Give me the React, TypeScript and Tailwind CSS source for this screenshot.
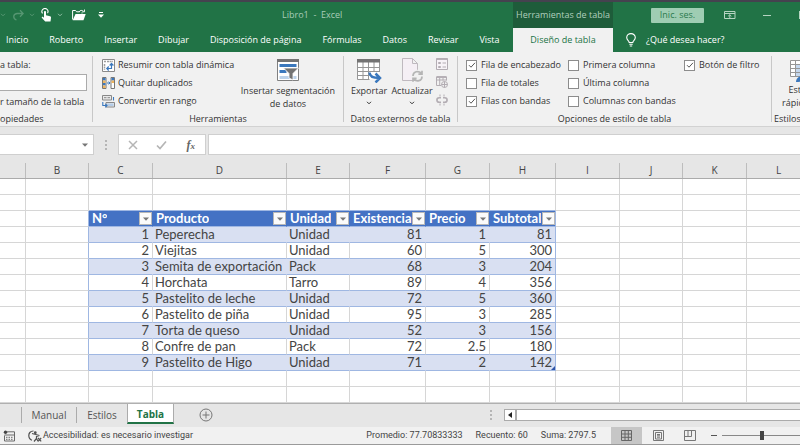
import React from 'react';
import clsx from 'clsx';

const TABS = ['Inicio', 'Roberto', 'Insertar', 'Dibujar', 'Disposición de página', 'Fórmulas', 'Datos', 'Revisar', 'Vista'];

const COLUMNS = [
  { name: '', width: 'w-[26px]' },
  { name: 'B', width: 'w-[63px]' },
  { name: 'C', width: 'w-[64px]' },
  { name: 'D', width: 'w-[134px]' },
  { name: 'E', width: 'w-[63px]' },
  { name: 'F', width: 'w-[76px]' },
  { name: 'G', width: 'w-[64px]' },
  { name: 'H', width: 'w-[66px]' },
  { name: 'I', width: 'w-[64px]' },
  { name: 'J', width: 'w-[63px]' },
  { name: 'K', width: 'w-[64px]' },
  { name: 'L', width: '' },
];

const HEADERS = ['N°', 'Producto', 'Unidad', 'Existencia', 'Precio', 'Subtotal'];

const ITEMS: (string | number)[][] = [
  [1, 'Peperecha', 'Unidad', 81, 1, 81],
  [2, 'Viejitas', 'Unidad', 60, 5, 300],
  [3, 'Semita de exportación', 'Pack', 68, 3, 204],
  [4, 'Horchata', 'Tarro', 89, 4, 356],
  [5, 'Pastelito de leche', 'Unidad', 72, 5, 360],
  [6, 'Pastelito de piña', 'Unidad', 95, 3, 285],
  [7, 'Torta de queso', 'Unidad', 52, 3, 156],
  [8, 'Confre de pan', 'Pack', 72, 2.5, 180],
  [9, 'Pastelito de Higo', 'Unidad', 71, 2, 142],
];

const OPTIONS = [
  [
    { label: 'Fila de encabezado', on: true },
    { label: 'Fila de totales', on: false },
    { label: 'Filas con bandas', on: true },
  ],
  [
    { label: 'Primera columna', on: false },
    { label: 'Última columna', on: false },
    { label: 'Columnas con bandas', on: false },
  ],
  [{ label: 'Botón de filtro', on: true }],
];

// first sheet column that belongs to the table
const FIRST = 2;

/* ---------- icons ---------- */

const Caret: React.FC<{ className?: string }> = ({ className }) => (
  <svg viewBox="0 0 6 4" className={clsx('h-1 w-1.5 shrink-0', className)} fill="none" stroke="currentColor">
    <path d="M1 .8 3 2.8 5 .8" />
  </svg>
);

const Triangle: React.FC = () => (
  <svg viewBox="0 0 6 4" className="h-1 w-1.5" fill="currentColor">
    <path d="M0 .5h6L3 3.7z" />
  </svg>
);

const RedoIcon = () => (
  <svg viewBox="0 0 12 12" className="h-3 w-3" fill="none" stroke="currentColor" strokeWidth="1.3">
    <path d="M4.5 11C1 10 .5 5 5 4.5h6M8 1.2l3.2 3.3L8 7.8" />
  </svg>
);

const TouchIcon = () => (
  <svg viewBox="0 0 11 14" className="h-3.5 w-[11px]">
    <path d="M1.6 5.4a3 3 0 1 1 4.9-.3" fill="none" stroke="#fff" strokeWidth="1.1" />
    <path d="M3 4c0-1.3 2-1.3 2 0v3.2l4 1c.8.2 1.1.7 1 1.5L9.500 13.500H4.200L.8 9.800c-.3-.9.6-1.300 1.300-.8l.9.700z" fill="#fff" />
  </svg>
);

const FolderIcon = () => (
  <svg viewBox="0 0 14 12" className="h-3 w-3.5">
    <path d="M.6 10.500V1.500h3l1 1.300h3M10 4.500V3.500" fill="none" stroke="#fff" />
    <path d="M7 3c1-2 3-2 4.500-.8M12.500.5v2.300h-2.300" fill="none" stroke="#fff" strokeWidth=".9" />
    <path d="M3.500 5H13.700L11.500 11.300H.7z" fill="#fff" />
  </svg>
);

const BulbIcon = () => (
  <svg viewBox="0 0 10 14" className="h-3.5 w-2.5" fill="none" stroke="#fff" strokeWidth="1.1">
    <path d="M3.200 9.500C3.200 7.800.7 7.200.7 4.600a4.300 4 0 0 1 8.600 0c0 2.600-2.500 3.200-2.500 4.900zM3.300 11.300h3.400M3.800 13h2.400" />
  </svg>
);

const RibbonToggleIcon = () => (
  <svg viewBox="0 0 12 10" className="h-2.5 w-3" fill="none" stroke="#b5d4c1">
    <path d="M.5 1.500h10.500v7H.5zM.5 3.500h10.500M5.800 8V4.800M4.200 6.200l1.600-1.500 1.600 1.500" />
  </svg>
);

const PivotIcon = () => (
  <svg viewBox="0 0 13 13" className="h-[13px] w-[13px]" fill="none">
    <path d="M.5.5h12v12H.5z" fill="#fff" stroke="#8a8a8a" />
    <path d="M2 2.500h2M5 2.500h6M2.500 5v6" stroke="#a0a0a0" strokeWidth="1.500" strokeDasharray="2 .6" />
    <path d="M5 9.500h4.500V5M6.700 7.500 4.800 9.500l1.900 2M7.700 6.500l1.800-2 1.900 2" stroke="#3b78bd" strokeWidth="1.200" />
  </svg>
);

const DuplicatesIcon = () => (
  <svg viewBox="0 0 13 12" className="h-3 w-[13px]" fill="none">
    <path d="M.5.5h3.500v11H.5zM9 .5h3.500v11H9z" fill="#fff" stroke="#777" />
    <path d="M1 1h2.500v2.500H1zM1 6h2.500v2.500H1zM9.500 1H12v2.500H9.500z" fill="#3b78bd" />
    <path d="M1 3.500h2.500V6H1zM1 8.500h2.500V11H1zM9.500 3.500H12V6H9.500z" fill="#f0b45c" />
    <path d="M5 6h3M6.600 4.600 8 6 6.600 7.400" stroke="#3b78bd" />
  </svg>
);

const RangeIcon = () => (
  <svg viewBox="0 0 13 13" className="h-[13px] w-[13px]" fill="none">
    <path d="M.5.500h9v4.500h-9zM4 7.500h8.500v4.500H4z" fill="#e9e9e9" stroke="#888" />
    <path d="M2 2.700h2.500M5.500 2.700h2.500" stroke="#888" />
    <path d="M5 8.500h6.500v2.500H5z" fill="#b5cde8" />
    <path d="M11.500 2v3.500M.8 7v3.500h4M3.300 8.800 5 10.500l-1.700 1.800" stroke="#3b78bd" strokeWidth="1.100" />
  </svg>
);

const SlicerIcon = () => (
  <svg viewBox="0 0 24 24" className="h-6 w-6" fill="none">
    <path d="M1.500 1.500h21v21h-21z" fill="#fff" stroke="#808080" />
    <path d="M1 1h22v3H1z" fill="#737373" />
    <path d="M3.500 6h17v3h-17zM3.500 12h7v3h-7z" fill="#3b78bd" />
    <path d="M3.500 18h17v3h-17z" fill="#bcd2ea" />
    <path d="M7.500 10h15l-5.500 5.500V22l-4-2v-4.500z" fill="#737373" stroke="#fff" strokeWidth=".8" />
  </svg>
);

const ExportIcon = () => (
  <svg viewBox="0 0 26 25" className="h-[25px] w-[26px]" fill="none">
    <path d="M1.500 1.500h22v20h-22z" fill="#fff" />
    <path d="M1.500 4v17.500h12M1.500 9.500h22M1.500 13.500h22M1.500 17.500h12M7 4v17.500M12.500 4v17.500M18 4v9M23.500 4v10" stroke="#969696" />
    <path d="M1 1h23v3.500H1z" fill="#737373" />
    <path d="M13.500 14.500c0 4 3 5.500 10 5.500M19.500 15.500l4.500 4.500-4.500 4.500" stroke="#3b78bd" strokeWidth="2.500" />
  </svg>
);

const RefreshIcon = () => (
  <svg viewBox="0 0 23 26" className="h-[26px] w-[23px]" fill="none">
    <path d="M1.500 1.500h10l5 5v17h-15zM11.500 1.500v5h5" fill="#f5eff5" stroke="#bfb9bf" />
    <circle cx="16.500" cy="19" r="6.200" fill="#f1f1f1" />
    <path d="M12 19c0-5 5.500-5.500 8.300-2.800M21 13.800v3.400h-3.600M21 19.500c0 5-5.500 5.300-8.200 2.700M12 24.800v-3.500h3.600" stroke="#b5b5b5" strokeWidth="1.700" />
  </svg>
);

const PropsIcon = () => (
  <svg viewBox="0 0 12 12" className="h-3 w-3" fill="none" stroke="#b3adb3">
    <path d="M.5.5h11v11H.5z" fill="#f7f3f7" />
    <path d="M.5 1.200h11" strokeWidth="1.500" />
    <path d="M2.500 4.500h2v1h-2zM2.500 8.500h2v1h-2zM6.500 5H10M6.500 9H10" />
  </svg>
);

const BrowserIcon = () => (
  <svg viewBox="0 0 12 12" className="h-3 w-3" fill="none" stroke="#b3adb3">
    <path d="M5 9.500H.5V1h10v3.500M.5 4h10M3.700 2v7.500M7 2v2.500" />
    <path d="M.5 1h10" strokeWidth="1.800" />
    <circle cx="8.500" cy="8.500" r="3" fill="#f1f1f1" />
    <path d="M5.500 8.500h6M8.500 5.500v6" />
  </svg>
);

const UnlinkIcon = () => (
  <svg viewBox="0 0 12 12" className="h-3 w-3" fill="none" stroke="#b3adb3">
    <path d="M5 3.700H3.200a2.300 2.300 0 0 0 0 4.600H5M7 3.700h1.800a2.300 2.300 0 0 1 0 4.600H7" strokeWidth="1.600" />
    <path d="M4 .5v2M8 .5v2M4 9.500v2M8 9.500v2" />
  </svg>
);

const StylesIcon = () => (
  <svg viewBox="0 0 24 24" className="h-6 w-6" fill="none">
    <path d="M.5 1.500h22v16H.5z" fill="#fff" />
    <path d="M5 5h18v12H5z" fill="#c5d8ee" />
    <path d="M.5 1.500h22v16H.5zM.5 5.500h22M.5 9.500h22M.5 13.500h22M5.500 1.500v16M11 1.500v16M16.500 1.500v16" stroke="#969696" />
    <path d="M6 23c0-4 3-6 7-6l2 2c-1 3-4 4-9 4z" fill="#3b78bd" />
  </svg>
);

const MacroIcon = () => (
  <svg viewBox="0 0 12 12" className="h-3 w-3" fill="none" stroke="#6a6a6a">
    <path d="M4 1.800h7.500v9.200H1.500V5.500M1.500 5h10" />
    <path d="M3 7.300h7M3 9.300h7" strokeDasharray="1.500 1" />
    <circle cx="2.500" cy="2.300" r="1.700" fill="#444" stroke="none" />
  </svg>
);

const AccessIcon = () => (
  <svg viewBox="0 0 14 12" className="h-3 w-3.5" fill="none" stroke="#505050" strokeWidth="1.200">
    <path d="M5.500 1C2 1 .8 3.500.8 5.500S2 9.500 4 10.200M4 3.500l7.500 2M11.500 5.500 8.500 6.500v2l-2.500 3M8.500 8.500l1.500 2.800" />
    <circle cx="7.300" cy="2.700" r=".8" fill="#505050" />
    <path d="M10 8l3.200 3.300M13.200 8 10 11.300" />
  </svg>
);

const GridViewIcon = () => (
  <svg viewBox="0 0 11 11" className="h-[11px] w-[11px]" fill="none" stroke="#666">
    <path d="M.5.500h10v10H.5zM.5 4h10M.5 7.300h10M4 .5v10M7.300.5v10" />
  </svg>
);

const PageViewIcon = () => (
  <svg viewBox="0 0 11 11" className="h-[11px] w-[11px]" fill="none" stroke="#777">
    <path d="M.5.500h10v10H.5zM2.500 2.500h6v6.500h-6zM4 4.500h3M4 5.800h3M4 7.200h3" />
  </svg>
);

const BreakViewIcon = () => (
  <svg viewBox="0 0 12 11" className="h-[11px] w-3" fill="none" stroke="#777">
    <path d="M.5.500h11v10H.5zM.5 6.500h7v-6M4 .5v6" />
  </svg>
);

/* ---------- pieces ---------- */

const Grip: React.FC = () => (
  <div className="h-2.5 w-0.5 border-l-2 border-dotted border-[#b5b5b5]" />
);

const Group: React.FC<{ title: string; className?: string; children: React.ReactNode }> = ({ title, className, children }) => (
  <section className={clsx('flex shrink-0 flex-col pt-1', className)}>
    <div className="h-[57px]">{children}</div>
    <h2 className="whitespace-nowrap text-center leading-3">{title}</h2>
  </section>
);

const Divider: React.FC = () => <div className="my-1 w-px shrink-0 bg-[#c8c8c8]" />;

const Command: React.FC<{ icon: React.ReactNode; label: string }> = ({ icon, label }) => (
  <button className="flex h-[18px] items-center gap-[3px] whitespace-nowrap">
    {icon}
    {label}
  </button>
);

const CheckOption: React.FC<{ label: string; on: boolean }> = ({ label, on }) => (
  <label className="flex h-[18px] items-center gap-1 whitespace-nowrap">
    <span className="grid place-items-center">
      <input
        type="checkbox"
        defaultChecked={on}
        className="peer col-start-1 row-start-1 h-[11px] w-[11px] appearance-none border border-[#8c8c8c] bg-white"
      />
      <svg
        viewBox="0 0 8 8"
        className="pointer-events-none invisible col-start-1 row-start-1 h-2 w-2 peer-checked:visible"
        fill="none"
        stroke="#555"
      >
        <path d="M1 4.200 3 6.200 7 1.800" />
      </svg>
    </span>
    {label}
  </label>
);

const HeaderCell: React.FC<{ label: string }> = ({ label }) => (
  <div className="flex h-[15px] items-center justify-between overflow-hidden">
    <span className="min-w-0 overflow-hidden whitespace-nowrap pl-[3px]">{label}</span>
    <button
      aria-label={`Filtrar ${label}`}
      className="grid h-[13px] w-[13px] shrink-0 place-items-center border border-[#b8b8b8] bg-[#fbfbfb] text-[#777]"
    >
      <Triangle />
    </button>
  </div>
);

const SheetRow: React.FC<{ row: number }> = ({ row }) => {
  const isHeader = row === 2;
  const item = ITEMS[row - 3];
  const inTable = isHeader || Boolean(item);
  const banded = Boolean(item) && row % 2 === 1;

  return (
    <tr className="h-4">
      {COLUMNS.map((col, c) => {
        const i = c - FIRST;
        const inside = i >= 0 && i < HEADERS.length;
        const value = item && inside ? item[i] : '';
        return (
          <td
            key={col.name}
            className={clsx(
              'relative h-4 border-b border-r p-0 leading-[15px]',
              inside && (inTable || row === 1) ? 'border-b-[#9fb7e2]' : 'border-b-[#d6d6d6]',
              inTable && (i === -1 || i === 5) && 'border-r-[#9fb7e2]',
              isHeader && inside && i < 5 && 'border-r-[#4472c4]',
              banded && inside && i < 5 && 'border-r-[#d9e0f2]',
              (!inTable || !inside) && !(inTable && i === -1) && 'border-r-[#d6d6d6]',
              inTable && !isHeader && !banded && inside && i < 5 && 'border-r-[#d6d6d6]',
              isHeader && inside && 'bg-[#4472c4] font-bold text-white',
              banded && inside && 'bg-[#d9e0f2]',
              typeof value === 'number' ? 'pr-[3px] text-right' : 'text-left',
            )}
          >
            {isHeader && inside && <HeaderCell label={HEADERS[i]} />}
            {item && inside && <div className={clsx('whitespace-nowrap', typeof value === 'string' && 'pl-0.5')}>{value}</div>}
            {row === 11 && i === 5 && (
              <span className="absolute bottom-0 right-0 border-b-4 border-l-4 border-b-[#2f55a8] border-l-transparent" />
            )}
          </td>
        );
      })}
    </tr>
  );
};

const App: React.FC = () => {
  return (
    <div className="w-full overflow-hidden bg-[#e6e6e6] font-['Open_Sans','Noto_Sans',sans-serif] text-[9px] text-[#333]">
      <header className="border-t-2 border-[#45424f] bg-[#217346] text-white">
        <div className="grid h-[26px] grid-cols-[513px_100px_1fr]">
          <div className="flex items-center">
            <div className="flex w-[282px] items-center text-[#569672]">
              <Caret />
              <button aria-label="Rehacer" className="ml-1.5"><RedoIcon /></button>
              <Caret className="ml-[5px]" />
              <button aria-label="Modo táctil" className="ml-[6px]"><TouchIcon /></button>
              <Caret className="ml-[5px] text-[#8fbda3]" />
              <button aria-label="Abrir" className="ml-[9px]"><FolderIcon /></button>
              <button aria-label="Personalizar" className="ml-3 flex flex-col items-center gap-px text-white">
                <span className="h-px w-1 bg-white" />
                <Triangle />
              </button>
            </div>
            <h1 className="whitespace-pre text-[#a9ccb8]">Libro1  -  Excel</h1>
          </div>
          <div className="grid place-items-center bg-[#1e5c3a] text-[#b0cfbd]">Herramientas de tabla</div>
          <div className="flex items-center overflow-hidden">
            <button className="ml-[38px] h-[15px] w-[53px] shrink-0 rounded-[1px] bg-[#9fcdb3] text-[#2b7a4e]">Inic. ses.</button>
            <button aria-label="Opciones de la cinta" className="ml-5 shrink-0"><RibbonToggleIcon /></button>
            <button aria-label="Minimizar" className="ml-[27px] h-px w-2 shrink-0 bg-[#b5d4c1]" />
            <button aria-label="Restaurar" className="ml-7 h-2 w-2 shrink-0 border border-[#b5d4c1]" />
          </div>
        </div>
        <nav className="grid h-[24px] grid-cols-[513px_100px_1fr]">
          <div className="flex items-center gap-[21px] pl-1.5">
            {TABS.map((tab) => (
              <button key={tab} className="whitespace-nowrap">{tab}</button>
            ))}
          </div>
          <button className="bg-[#f1f1f1] text-[#217346]">Diseño de tabla</button>
          <button className="flex items-center gap-2.5 pl-[13px]">
            <BulbIcon />
            ¿Qué desea hacer?
          </button>
        </nav>
      </header>

      <div className="flex h-[75px] overflow-hidden border-b border-[#d2d2d2] bg-[#f1f1f1]">
        <section className="flex w-[92px] shrink-0 flex-col pt-1">
          <div className="h-[57px]">
            <label htmlFor="table-name" className="block h-[18px] leading-[18px]">a tabla:</label>
            <input id="table-name" className="block h-[17px] w-[87px] border border-l-0 border-[#ababab] bg-white" />
            <button className="mt-0.5 block h-[18px] whitespace-nowrap">r tamaño de la tabla</button>
          </div>
          <h2 className="leading-3">opiedades</h2>
        </section>
        <Divider />
        <Group title="Herramientas" className="w-[250px]">
          <div className="flex justify-between pl-[9px] pr-2">
            <div>
              <Command icon={<PivotIcon />} label="Resumir con tabla dinámica" />
              <Command icon={<DuplicatesIcon />} label="Quitar duplicados" />
              <Command icon={<RangeIcon />} label="Convertir en rango" />
            </div>
            <button className="flex flex-col items-center whitespace-nowrap pt-0.5 leading-[13px]">
              <SlicerIcon />
              <span className="mt-0.5">Insertar segmentación<br />de datos</span>
            </button>
          </div>
        </Group>
        <Divider />
        <Group title="Datos externos de tabla" className="w-[113px]">
          <div className="flex pl-[7px]">
            <button className="flex w-9 flex-col items-center pt-0.5 leading-[13px]">
              <ExportIcon />
              <span className="mt-px">Exportar</span>
              <Caret className="mt-1" />
            </button>
            <button className="ml-1 flex w-[42px] flex-col items-center pt-px leading-[13px]">
              <RefreshIcon />
              <span className="mt-px">Actualizar</span>
              <Caret className="mt-1" />
            </button>
            <div className="ml-[3px] flex flex-col gap-[6px] pt-0.5">
              <PropsIcon />
              <BrowserIcon />
              <UnlinkIcon />
            </div>
          </div>
        </Group>
        <Divider />
        <Group title="Opciones de estilo de tabla" className="w-[313px]">
          <div className="grid grid-cols-[102px_116px_1fr] pl-2">
            {OPTIONS.map((list) => (
              <div key={list[0].label}>
                {list.map((o) => (
                  <CheckOption key={o.label} label={o.label} on={o.on} />
                ))}
              </div>
            ))}
          </div>
        </Group>
        <Divider />
        <Group title="Estilos de tabla" className="pl-0.5">
          <button className="ml-2 flex flex-col items-center whitespace-nowrap pt-[3px] leading-[13px]">
            <StylesIcon />
            <span>Estilos</span>
            <span className="flex items-center gap-0.5">
              rápidos
              <Caret />
            </span>
          </button>
        </Group>
      </div>

      <div className="flex h-7 items-end">
        <div className="flex h-[21px] w-[94px] shrink-0 items-center justify-end border border-l-0 border-[#cfcfcf] bg-white pr-[5px] text-[#777]">
          <Triangle />
        </div>
        <div className="flex h-[21px] w-6 items-center justify-center"><Grip /></div>
        <div className="grid h-[21px] w-[88px] shrink-0 grid-cols-3 place-items-center border border-[#cfcfcf] bg-white">
          <button aria-label="Cancelar">
            <svg viewBox="0 0 10 10" className="h-2.5 w-2.5" stroke="#b5b5b5" strokeWidth="1.500"><path d="M1 1l8 8M9 1 1 9" /></svg>
          </button>
          <button aria-label="Aceptar">
            <svg viewBox="0 0 11 10" className="h-2.5 w-[11px]" fill="none" stroke="#b5b5b5" strokeWidth="1.700"><path d="M1 5.500 4 8.500 10 1.500" /></svg>
          </button>
          <button aria-label="Insertar función" className="font-['Liberation_Serif',serif] text-[12px] font-bold italic leading-none text-[#666]">
            f<span className="text-[9px]">x</span>
          </button>
        </div>
        <input aria-label="Barra de fórmulas" className="ml-0.5 h-[21px] min-w-0 flex-1 border border-r-0 border-[#cfcfcf] bg-white" />
      </div>

      {/* the last column runs past the window edge */}
      <table className="w-[calc(100%+11px)] table-fixed border-separate border-spacing-0 bg-white font-['Lato',sans-serif] text-[13px] text-[#444]">
        <thead>
          <tr className="h-6 bg-[#e6e6e6] font-['Open_Sans',sans-serif] text-[10px]">
            {COLUMNS.map((col) => (
              <th key={col.name} className={clsx('h-6 border-b border-[#ababab] p-0 pt-2 font-normal', col.width)}>
                <div className="h-[15px] border-r border-[#bdbdbd] leading-[14px]">{col.name}</div>
              </th>
            ))}
          </tr>
        </thead>
        <tbody>
          {Array.from({ length: 14 }, (_, row) => (
            <SheetRow key={row} row={row} />
          ))}
        </tbody>
      </table>

      <div className="flex h-6 items-start border-t border-[#b0b0b0] text-[10px] text-[#555]">
        <div className="mt-[3px] h-4 w-[22px] shrink-0 border-r border-[#ababab]" />
        <button className="mt-[3px] h-4 w-[55px] shrink-0 border-r border-[#ababab]">Manual</button>
        <button className="mt-[3px] h-4 w-[50px] shrink-0">Estilos</button>
        <button className="h-5 w-[47px] shrink-0 border-x border-b-2 border-x-[#ababab] border-b-[#217346] bg-white pt-0.5 font-bold text-[#217346]">Tabla</button>
        <button aria-label="Hoja nueva" className="ml-[25px] mt-1 shrink-0">
          <svg viewBox="0 0 14 14" className="h-3.5 w-3.5" fill="none" stroke="#777"><circle cx="7" cy="7" r="6" /><path d="M7 3.500v7M3.500 7h7" /></svg>
        </button>
        <div className="ml-auto mt-[5px] flex h-3 w-[310px] items-center">
          <Grip />
          <button aria-label="Desplazar a la izquierda" className="ml-3 grid h-3 w-3 place-items-center border border-[#ababab] bg-white">
            <svg viewBox="0 0 4 6" className="h-1.5 w-1" fill="#222"><path d="M4 0v6L0 3z" /></svg>
          </button>
          <div className="h-3 flex-1 border border-r-0 border-[#ababab] bg-white" />
        </div>
      </div>

      <footer className="flex h-[18px] items-center border-b border-[#9a9a9a] bg-[#f1f1f1] font-['Roboto',sans-serif] text-[#444]">
        <button aria-label="Grabar macro" className="ml-[3px]"><MacroIcon /></button>
        <button className="ml-[13px] flex items-center gap-px whitespace-nowrap">
          <AccessIcon />
          Accesibilidad: es necesario investigar
        </button>
        <div className="ml-auto flex gap-[13px] whitespace-nowrap">
          <span>Promedio: 77.70833333</span>
          <span>Recuento: 60</span>
          <span>Suma: 2797.5</span>
        </div>
        <div className="ml-[15px] flex h-full w-[189px] shrink-0 items-center overflow-hidden">
          <button aria-label="Normal" className="grid h-full w-[31px] shrink-0 place-items-center bg-[#c6c6c6]"><GridViewIcon /></button>
          <button aria-label="Diseño de página" className="grid h-full w-8 shrink-0 place-items-center"><PageViewIcon /></button>
          <button aria-label="Salto de página" className="grid h-full w-8 shrink-0 place-items-center"><BreakViewIcon /></button>
          <button aria-label="Alejar" className="ml-[5px] h-px w-1.5 shrink-0 bg-[#555]" />
          <input
            type="range"
            aria-label="Zoom"
            defaultValue={50}
            className="ml-[5px] h-3 w-[80px] shrink-0 appearance-none bg-transparent [&::-webkit-slider-runnable-track]:h-px [&::-webkit-slider-runnable-track]:bg-[#888] [&::-webkit-slider-thumb]:-mt-1 [&::-webkit-slider-thumb]:h-[9px] [&::-webkit-slider-thumb]:w-1 [&::-webkit-slider-thumb]:appearance-none [&::-webkit-slider-thumb]:bg-[#444]"
          />
        </div>
      </footer>
    </div>
  );
};

export default App;
